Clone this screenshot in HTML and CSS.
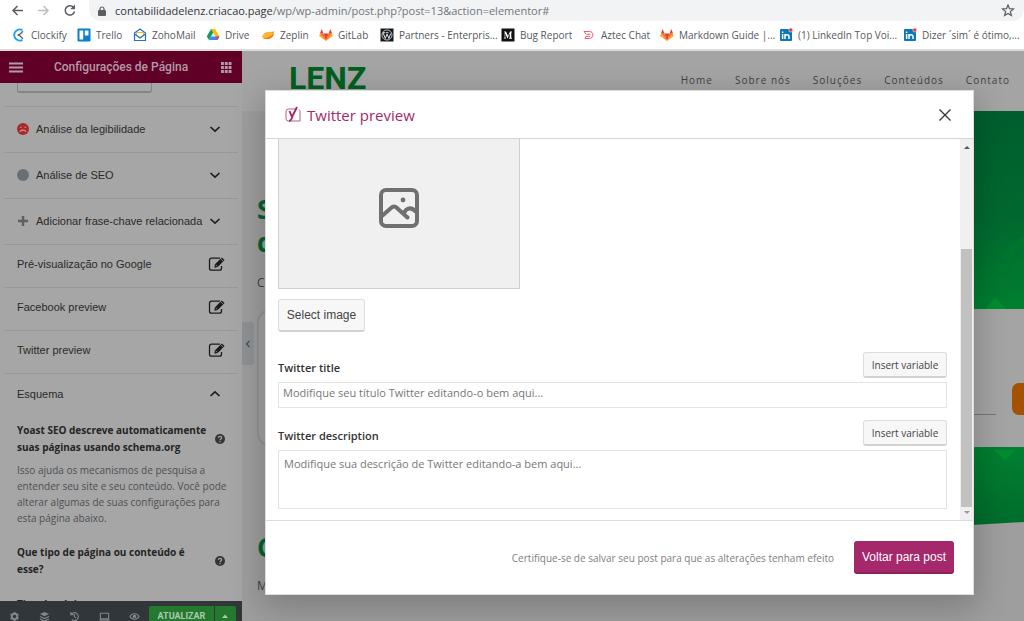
FILE: index.html
```html
<!DOCTYPE html>
<html lang="pt-BR">
<head>
<meta charset="utf-8">
<meta name="viewport" content="width=device-width, initial-scale=1">
<title>Elementor</title>
<link rel="stylesheet" href="styles.css">
</head>
<body>
<svg class="defs" aria-hidden="true">
  <symbol id="down" viewBox="0 0 12 12"><path d="M1.500 4 6 8.200 10.500 4" fill="none" stroke="currentColor" stroke-width="1.600"/></symbol>
  <symbol id="edit" viewBox="0 0 18 16"><path d="M12 2.200H3.500a2 2 0 0 0-2 2v8a2 2 0 0 0 2 2h8a2 2 0 0 0 2-2V10" fill="none" stroke="currentColor" stroke-width="1.300"/><path d="m6.300 11.800.7-3.600L13.800 1.400l2.800 2.700-6.800 6.900z" fill="currentColor"/><path d="m7.600 8.700 1.700 1.700M12.600 2.600l2.800 2.700" stroke="#a6a6a6" stroke-width=".7"/></symbol>
  <symbol id="help" viewBox="0 0 10 10"><circle cx="5" cy="5" r="5" fill="currentColor"/><path d="M3.400 3.900c.1-2 3.300-1.900 3.300-.1C6.700 5 5.100 5 5.100 6.200M5.100 7v1.200" fill="none" stroke="#a6a6a6" stroke-width="1.200"/></symbol>
  <symbol id="fox" viewBox="0 0 14 14"><path d="m7 13 2.500-7.500h-5z" fill="#e24329"/><path d="M7 13 4.500 5.500H1zM7 13l2.500-7.500H13z" fill="#fc6d26"/><path d="M1 5.500.2 8 7 13zM13 5.500l.8 2.500L7 13z" fill="#fca326"/><path d="m1 5.500 1.600-4.500 1.900 4.500zM13 5.500 11.400 1 9.500 5.500z" fill="#e24329"/></symbol>
  <symbol id="linkedin" viewBox="0 0 14 14"><rect x="1" y="1" width="12" height="12" rx="1" fill="#0a78b8"/><path d="M3.600 6v5M3.600 3.500v1.400M6 6v5M6 8.500c0-2.500 4-2.500 4 0V11" fill="none" stroke="#fff" stroke-width="1.500"/><circle cx="11.800" cy="2" r="2" fill="#ee3b30" stroke="#fff" stroke-width=".5"/></symbol>
</svg>

<header class="browser">
  <div class="address-row">
    <button class="icon-button" aria-label="Voltar"><svg viewBox="0 0 14 14"><path d="M12 6.500H2M6.500 2 2 6.500 6.500 11" fill="none" stroke="#5a5d61" stroke-width="1.500"/></svg></button>
    <button class="icon-button" aria-label="Avançar"><svg viewBox="0 0 14 14"><path d="M1 6.500h10M6.500 2 11 6.500 6.500 11" fill="none" stroke="#bcbec1" stroke-width="1.500"/></svg></button>
    <button class="icon-button" aria-label="Recarregar"><svg viewBox="0 0 14 14"><path d="M10.500 3.300A4.700 4.700 0 1 0 11.500 7.500" fill="none" stroke="#5a5d61" stroke-width="1.500"/><path d="M12 .5v4.800H7.200z" fill="#5a5d61"/></svg></button>
    <div class="address">
      <svg class="lock" viewBox="0 0 8 10"><rect y="4" width="8" height="6" rx="1" fill="#5a5d61"/><path d="M2 4.500V3a2 2 0 0 1 4 0v1.500" fill="none" stroke="#5a5d61" stroke-width="1.200"/></svg>
      <span class="url"><span class="host">contabilidadelenz.criacao.page</span>/wp/wp-admin/post.php?post=13&amp;action=elementor#</span>
      <svg class="star" viewBox="0 0 14 14"><path d="m7 1 1.500 3.700 4 .3-3.100 2.600 1 3.900L7 9.400l-3.400 2.100 1-3.900L1.500 5l4-.3z" fill="none" stroke="#5a5d61" stroke-width="1.200"/></svg>
    </div>
  </div>
  <nav class="bookmarks" aria-label="Favoritos">
    <a href="#"><svg viewBox="0 0 14 14"><path d="M10.500 2.100A5.600 5.600 0 1 0 10.500 11.900" fill="none" stroke="#18a8f0" stroke-width="1.800"/><path d="m7 7 4-3.700M7 7l4 3.700" stroke="#555b60" stroke-width="1.200"/><circle cx="6.500" cy="7" r="1" fill="#555b60"/></svg>Clockify</a>
    <a href="#"><svg viewBox="0 0 14 14"><rect x=".5" y=".5" width="13" height="13" rx="1" fill="#0a80c8"/><path d="M2.500 2.500h3.700v9H2.500zM7.800 2.500h3.700v5H7.800z" fill="#fff"/></svg>Trello</a>
    <a href="#"><svg viewBox="0 0 14 14"><path d="M1.500 5 7 1l5.500 4v7.500h-11z" fill="#fff" stroke="#2872b8" stroke-width="1.200"/><path d="M3.500 4.500h7v3L7 9.500l-3.500-2z" fill="#fff" stroke="#edb02c"/><path d="m1.500 6 5.500 4 5.500-4" fill="none" stroke="#2872b8" stroke-width="1.200"/></svg>ZohoMail</a>
    <a href="#"><svg viewBox="0 0 14 14"><path d="M5 1h4l4.500 7.500h-4z" fill="#fbbc04"/><path d="m5 1 2.200 3.600L3 12 .8 8.500z" fill="#0f9d58"/><path d="m3 12 2-3.500h8.500l-2 3.500z" fill="#4285f4"/><path d="m11.500 12 2-3.500h-4z" fill="#ea4335"/></svg>Drive</a>
    <a href="#"><svg viewBox="0 0 14 14"><ellipse cx="7" cy="7.300" rx="5.500" ry="3.500" transform="rotate(-14 7 7)" fill="#fdb52d"/><path d="M1 10c3 1 9-.5 12-5-.5 4-3.500 6-7 6-2 0-4 0-5-1z" fill="#ee7723"/><path d="m10 4 3.500-.8L12 6M2 8 .4 8.500 2 9.500" fill="#f69833"/></svg>Zeplin</a>
    <a href="#"><svg><use href="#fox"/></svg>GitLab</a>
    <a href="#"><svg viewBox="0 0 14 14"><path d="M.5.500h13v13H.500z" fill="#161b20"/><circle cx="7" cy="7" r="5" fill="none" stroke="#ddd" stroke-width=".8"/><path d="m3.200 5 2.100 5.500L7 6l1.900 4.500 1.700-5M2.800 4.700h2.500M6 4.700h2.500" fill="none" stroke="#ddd"/></svg>Partners - Enterpris...</a>
    <a href="#"><svg viewBox="0 0 14 14"><path d="M.5.500h13v13H.500z" fill="#101010"/><path d="M3 3.500h2L7 8l2-4.500h2v.6l-.7.600v4.800l.8.700v.5H8v-.5l.7-.7V5.500l-2.200 5.200L4.300 5.600v3.700l1 1.300H2.700l1-1.300V4.500z" fill="#fff"/></svg>Bug Report</a>
    <a href="#"><svg viewBox="0 0 14 14"><path d="M2 3.500h5.500c4.500 0 4.500 6.500 0 7H3l1-2.300M2 3.500l2 2.700M4.500 6.200h4M4 8.300h4" fill="none" stroke="#f05573"/></svg>Aztec Chat</a>
    <a href="#"><svg><use href="#fox"/></svg>Markdown Guide |...</a>
    <a href="#"><svg><use href="#linkedin"/></svg>(1) LinkedIn Top Voi...</a>
    <a href="#"><svg><use href="#linkedin"/></svg>Dizer ´sim´ é ótimo,...</a>
  </nav>
</header>

<main class="workspace">
  <aside class="panel">
    <header class="panel-header">
      <button class="icon-button" aria-label="Menu"><svg viewBox="0 0 14 14"><path d="M0 3.500h14M0 7.500h14M0 11.500h14" stroke="currentColor" stroke-width="2"/></svg></button>
      <h1>Configurações de Página</h1>
      <button class="icon-button" aria-label="Widgets"><svg viewBox="0 0 14 14"><path d="M2 3.500h10.500M2 7.500h10.500M2 11.500h10.500" stroke="currentColor" stroke-width="2.800" stroke-dasharray="2.900 .9"/></svg></button>
    </header>
    <div class="panel-body">
      <div class="field-end"><span></span></div>
      <button class="row"><svg class="mark" viewBox="0 0 12 12"><circle cx="6" cy="6" r="6" fill="#a82a2a"/><path d="M3 8.800c1-2.200 5-2.200 6 0M3 4.300h1.500M7.500 4.300H9" fill="none" stroke="#d29a9a" stroke-width="1.100"/></svg><span>Análise da legibilidade</span><svg class="chevron"><use href="#down"/></svg></button>
      <button class="row"><svg class="mark" viewBox="0 0 12 12"><circle cx="6" cy="6" r="6" fill="#6a6f76"/></svg><span>Análise de SEO</span><svg class="chevron"><use href="#down"/></svg></button>
      <button class="row"><svg class="mark" viewBox="0 0 12 12"><path d="M6 1v10M1 6h10" stroke="#5f5f5f" stroke-width="2.500"/></svg><span>Adicionar frase-chave relacionada</span><svg class="chevron"><use href="#down"/></svg></button>
      <button class="row short"><span>Pré-visualização no Google</span><svg class="edit"><use href="#edit"/></svg></button>
      <button class="row short"><span>Facebook preview</span><svg class="edit"><use href="#edit"/></svg></button>
      <button class="row short"><span>Twitter preview</span><svg class="edit"><use href="#edit"/></svg></button>
      <button class="row open"><span>Esquema</span><svg class="chevron up"><use href="#down"/></svg></button>
      <section class="schema">
        <div class="question"><h2>Yoast SEO descreve automaticamente suas páginas usando schema.org</h2><svg><use href="#help"/></svg></div>
        <p>Isso ajuda os mecanismos de pesquisa a entender seu site e seu conteúdo. Você pode alterar algumas de suas configurações para esta página abaixo.</p>
        <div class="question"><h2>Que tipo de página ou conteúdo é esse?</h2><svg><use href="#help"/></svg></div>
        <h3>Tipo de página</h3>
      </section>
    </div>
    <footer class="panel-footer">
      <button class="tool" aria-label="Configurações"><svg viewBox="0 0 12 12"><circle cx="6" cy="6" r="3" fill="none" stroke="currentColor" stroke-width="2.200"/><path d="M6 1v1.500M6 9.500V11M1.700 3.500 3 4.200M9 7.800l1.300.7M1.700 8.500 3 7.800M9 4.200l1.300-.7" stroke="currentColor" stroke-width="2"/></svg></button>
      <button class="tool" aria-label="Navegador"><svg viewBox="0 0 12 12"><path d="m6 1 5 2.300L6 5.600 1 3.300z" fill="currentColor"/><path d="m1 6 5 2.300L11 6M1 8.700 6 11l5-2.300" fill="none" stroke="currentColor" stroke-width="1.400"/></svg></button>
      <button class="tool" aria-label="Histórico"><svg viewBox="0 0 12 12"><path d="M2.500 3.500A4.300 4.300 0 1 1 3 9.300M2 1v3h3M6 3.500V6.500l2 1" fill="none" stroke="currentColor" stroke-width="1.200"/></svg></button>
      <button class="tool" aria-label="Modo responsivo"><svg viewBox="0 0 12 12"><path d="M1.500 2.500h9v6h-9zM.5 10h11" fill="none" stroke="currentColor" stroke-width="1.200"/></svg></button>
      <button class="tool" aria-label="Visualizar"><svg viewBox="0 0 12 12"><path d="M1 6c2-4 8-4 10 0-2 4-8 4-10 0z" fill="none" stroke="currentColor" stroke-width="1.200"/><circle cx="6" cy="6" r="2" fill="currentColor"/></svg></button>
      <button class="update">ATUALIZAR</button><button class="update more" aria-label="Opções"><svg viewBox="0 0 6 4"><path d="m0 4 3-3.500L6 4z" fill="currentColor"/></svg></button>
    </footer>
  </aside>

  <div class="site">
    <header class="site-header">
      <strong class="logo">LENZ</strong>
      <nav class="menu" aria-label="Site"><a href="#">Home</a><a href="#">Sobre nós</a><a href="#">Soluções</a><a href="#">Conteúdos</a><a href="#">Contato</a></nav>
    </header>
    <section class="hero">
      <div class="hero-text"><h2>S<br>d</h2><p>C</p></div>
      <svg class="hero-art" viewBox="0 0 52 198" preserveAspectRatio="none"><defs><linearGradient id="g" x2="0" y2="1"><stop stop-color="#005e2e"/><stop offset=".55" stop-color="#00692f"/><stop offset="1" stop-color="#007f2f"/></linearGradient></defs><path d="M0 0h52v198H0z" fill="url(#g)"/><path d="M52 126c-14 6-20 14-19 22l7 3c2-8 5-12 12-16zM5 152l11 7-7 9zM18 158l12-7 5 5 17-8v6l-16 8z" fill="#00782f" opacity=".6"/><path d="m13 198 10-11 11 11z" fill="#008d2f"/></svg>
    </section>
    <section class="form-band"><span class="card"></span><span class="line"></span><span class="cta"></span></section>
    <section class="lower">
      <svg class="lower-art" viewBox="0 0 52 80" preserveAspectRatio="none"><defs><linearGradient id="h" x2="0" y2="1"><stop stop-color="#008030"/><stop offset="1" stop-color="#006c2d"/></linearGradient></defs><path d="M0 0h52v75L0 78z" fill="url(#h)"/><path d="m22 3 11 10L44 3z" fill="#008d2f"/></svg>
      <div class="lower-text"><h2>C</h2><p>M</p></div>
    </section>
    <button class="collapse" aria-label="Recolher painel"><svg viewBox="0 0 6 8"><path d="M4.500 1 1.500 4l3 3" fill="none" stroke="#464b50" stroke-width="1.200"/></svg></button>
  </div>

  <div class="overlay">
    <div class="modal" role="dialog" aria-labelledby="modal-title">
      <header class="modal-header">
        <svg class="yoast" viewBox="0 0 16 18"><path d="M10.500 3H3.500A2.500 2.500 0 0 0 1 5.500v7A2.500 2.500 0 0 0 3.500 15H15V5.500a2.500 2.500 0 0 0-1-2" fill="none" stroke="#b85b91"/><path d="m4.500 5 2.500 6L12 1M7.500 10.500c-1 3-1.700 4.500-3.500 4.500" fill="none" stroke="#a4286a" stroke-width="1.900"/></svg>
        <h2 id="modal-title">Twitter preview</h2>
        <button class="close" aria-label="Fechar"><svg viewBox="0 0 12 12"><path d="m.5.500 11 11M11.500.500l-11 11" stroke="#333" stroke-width="1.300"/></svg></button>
      </header>
      <div class="modal-main">
        <form class="modal-form">
          <div class="image-slot"><svg viewBox="0 0 40 40"><rect x="2" y="2" width="36" height="36" rx="5" fill="none" stroke="#707070" stroke-width="4"/><path d="m3 28 9-8q3-3 6 0l11 10M24 26l3-4q5-4 10 2" fill="none" stroke="#707070" stroke-width="4"/><circle cx="24" cy="12" r="2.400" fill="#707070"/><circle cx="28.500" cy="29.500" r="2" fill="#707070"/></svg></div>
          <button type="button" class="button select-image">Select image</button>
          <div class="label-row"><label for="title">Twitter title</label><button type="button" class="button variable">Insert variable</button></div>
          <input id="title" type="text" placeholder="Modifique seu título Twitter editando-o bem aqui...">
          <div class="label-row second"><label for="description">Twitter description</label><button type="button" class="button variable">Insert variable</button></div>
          <textarea id="description" placeholder="Modifique sua descrição de Twitter editando-a bem aqui..."></textarea>
        </form>
        <div class="scrollbar" aria-hidden="true"><svg viewBox="0 0 6 4"><path d="m0 4 3-3 3 3z" fill="#555"/></svg><span class="thumb"></span><svg viewBox="0 0 6 4"><path d="m0 0 3 3 3-3z" fill="#999"/></svg></div>
      </div>
      <footer class="modal-footer"><p>Certifique-se de salvar seu post para que as alterações tenham efeito</p><button class="primary">Voltar para post</button></footer>
    </div>
  </div>
</main>
</body>
</html>
```

FILE: styles.css
```css
* { box-sizing: border-box; }
body {
  margin: 0;
  height: 100vh;
  display: flex;
  flex-direction: column;
  overflow: hidden;
  font-family: "Open Sans", "Noto Sans", sans-serif;
  font-size: 11px;
  color: #333;
}
h1, h2, h3, p { margin: 0; }
button { font: inherit; color: inherit; border: 0; padding: 0; background: none; cursor: pointer; }
a { color: inherit; text-decoration: none; }
svg { display: block; flex: none; }
.defs { position: absolute; width: 0; height: 0; }

/* Browser bars */
.browser { background: #fff; border-bottom: 2px solid #dcdcdc; flex: none; }
.address-row { display: flex; align-items: center; gap: 12px; height: 21px; padding-left: 11px; }
.icon-button svg { width: 14px; height: 14px; }
.address { flex: 1; display: flex; align-items: center; gap: 9px; height: 21px; padding: 0 9px 0 9px; background: #f1f3f4; border-radius: 0 0 12px 12px; }
.lock { width: 8px; height: 10px; }
.url { flex: 1; font-size: 11px; line-height: 20px; color: #72767b; white-space: nowrap; }
.host { color: #333639; }
.star { width: 14px; height: 14px; }
.bookmarks {
  display: grid;
  grid-template-columns: 65px 56px 73px 55px 58px 61px 121px 81px 78px 119px 124px 119px;
  height: 28px;
  padding-left: 12px;
  font-size: 10px;
  color: #55585c;
  white-space: nowrap;
}
.bookmarks a { display: flex; align-items: center; gap: 5px; }
.bookmarks svg { width: 14px; height: 14px; }

.workspace { position: relative; flex: 1; min-height: 0; display: flex; overflow: hidden; }

/* Editor panel */
.panel { width: 242px; flex: none; display: flex; flex-direction: column; background: #a6a6a6; }
.panel-header { display: flex; align-items: center; justify-content: space-between; height: 32px; padding: 0 9px; background: #600027; color: #b39ba5; flex: none; }
.panel-header h1 { font: 500 12px Roboto, sans-serif; }
.panel-body { flex: 1; min-height: 0; overflow: hidden; padding: 0 4px; }
.field-end { height: 24px; padding: 0 13px; border-bottom: 1px solid #989898; }
.field-end span { display: block; width: 135px; height: 10px; border: 1px solid #858585; border-top: 0; border-bottom-width: 2px; border-radius: 0 0 3px 3px; }
.row { display: flex; align-items: center; width: 100%; height: 46px; padding: 0 13px 2px; border-bottom: 1px solid #989898; font: 11px "Liberation Sans", sans-serif; color: #2a2a2a; text-align: left; }
.row span { flex: 1; white-space: nowrap; }
.row.short { height: 43px; padding-bottom: 4px; }
.row.open { height: 44px; border: 0; padding-bottom: 4px; }
.mark { width: 12px; height: 12px; margin-right: 7px; }
.chevron { width: 12px; height: 12px; margin-right: 4px; color: #1c1c1c; }
.up { transform: scaleY(-1); }
.edit { width: 18px; height: 16px; margin-right: -1px; color: #1c1c1c; }
.schema { padding: 4px 9px 0 13px; }
.question { display: flex; align-items: center; justify-content: space-between; padding-right: 4px; }
.question svg { width: 10px; height: 10px; color: #353535; }
.question h2 { width: 194px; font-size: 10px; font-weight: 700; line-height: 17px; color: #242424; }
.schema h3 { margin-top: 18px; font-size: 10px; font-weight: 700; line-height: 17px; color: #242424; }
.schema p { margin: 6px 0 18px; font-size: 10px; line-height: 16px; color: #4c5054; }
.panel-footer { display: flex; align-items: stretch; height: 20px; padding: 5px 6px 0 0; background: #31363b; color: #81868a; flex: none; overflow: hidden; }
.tool { flex: 1; display: flex; align-items: center; justify-content: center; height: 20px; }
.tool svg { width: 11px; height: 11px; }
.update { display: flex; align-items: center; justify-content: center; width: 65px; height: 20px; background: #25792f; color: #a9c9ad; border-radius: 2px 0 0 0; font: 700 9px Roboto, sans-serif; }
.update.more { width: 21px; margin-left: 1px; border-radius: 0 2px 0 0; }
.update svg { width: 6px; height: 4px; }

/* Site preview */
.site { position: relative; flex: 1; min-width: 0; display: flex; flex-direction: column; background: #9e9e9e; }
.site-header { display: flex; align-items: center; justify-content: space-between; height: 60px; padding: 0 14px 2px 47px; background: #a4a4a4; }
.logo { padding-bottom: 4px; font: 700 32px Roboto, sans-serif; color: #005f20; }
.menu { display: flex; gap: 22px; font-size: 10px; letter-spacing: 1px; color: #414141; }
.hero { display: flex; justify-content: space-between; height: 198px; }
.hero-text { padding: 82px 0 0 15px; }
.hero-text h2, .lower-text h2 { font: 700 26px/33px "Open Sans", sans-serif; color: #00642c; }
.hero-text p, .lower-text p { font-size: 12px; line-height: 20px; color: #414141; }
.hero-text p { margin-top: 14px; }
.hero-art { width: 52px; height: 198px; }
.form-band { display: flex; align-items: flex-start; height: 138px; background: linear-gradient(90deg, #9e9e9e 50%, #a4a4a4 50%); }
.card { width: 80px; height: 138px; margin-left: 15px; border: 2px solid #929292; border-radius: 14px; background: #a2a2a2; }
.line { width: 44px; height: 1px; margin: 105px 16px 0 auto; background: #777; }
.cta { width: 12px; height: 32px; margin-top: 74px; border-radius: 7px 0 0 7px; background: #a35300; }
.lower { display: flex; flex: 1; flex-direction: row-reverse; justify-content: space-between; }
.lower-art { width: 52px; height: 80px; }
.lower-text { padding: 84px 0 0 15px; }
.lower-text p { margin-top: 12px; }
.collapse { position: absolute; left: 0; top: 271px; width: 12px; height: 43px; padding-left: 3px; background: #8f9295; border-radius: 0 3px 3px 0; }
.collapse svg { width: 6px; height: 8px; }

/* Dialog */
.overlay { position: absolute; inset: 0; display: flex; padding: 39px 50px 26px 265px; }
.modal { flex: 1; min-width: 0; display: flex; flex-direction: column; background: #fff; border: 1px solid #ddd; box-shadow: 0 10px 30px 4px rgba(0, 0, 0, .2); }
.modal-header { display: flex; align-items: center; gap: 6px; height: 48px; padding: 0 22px 0 19px; border-bottom: 1px solid #d4d4d4; }
.yoast { width: 16px; height: 18px; }
.modal-header h2 { flex: 1; font-size: 15px; font-weight: 400; color: #a4286a; }
.close svg { width: 12px; height: 12px; }
.modal-main { flex: 1; min-height: 0; display: flex; overflow: hidden; }
.modal-form { flex: 1; display: flex; flex-direction: column; padding: 0 13px 11px 12px; }
.image-slot { display: flex; align-items: center; justify-content: center; width: 242px; height: 150px; padding-bottom: 12px; background: #f0f0f0; border: 1px solid #d0d0d0; border-top: 0; flex: none; }
.image-slot svg { width: 40px; height: 40px; }
.button { background: #f7f7f7; border: 1px solid #dcdcdc; border-bottom: 2px solid #d2d2d2; border-radius: 3px; color: #444; }
.select-image { width: 87px; height: 33px; margin: 10px 0 20px; font: 12px "Liberation Sans", sans-serif; flex: none; }
.label-row { display: flex; align-items: center; justify-content: space-between; height: 26px; margin-bottom: 4px; flex: none; }
.label-row label { padding-top: 5px; font-weight: 600; font-size: 11px; color: #333; }
.label-row.second { margin-top: 12px; }
.variable { width: 84px; height: 26px; font-size: 10px; }
input, textarea { width: 100%; margin: 0; border: 1px solid #e3e3e3; background: #fff; font: 11px/15px "Open Sans", sans-serif; color: #333; outline: 0; border-radius: 0; }
input { height: 26px; padding: 0 4px 5px; flex: none; }
textarea { flex: 1; padding: 5px; resize: none; }
input::placeholder, textarea::placeholder { color: #777; opacity: 1; }
.scrollbar { display: flex; flex-direction: column; align-items: center; width: 13px; padding: 6px 0 5px; background: #f0f0f0; }
.scrollbar svg { width: 6px; height: 4px; }
.thumb { width: 11px; height: 258px; margin: auto 0 4px; background: #c1c1c1; }
.modal-footer { display: flex; align-items: center; justify-content: flex-end; gap: 20px; height: 74px; padding-right: 19px; border-top: 1px solid #ddd; }
.modal-footer p { font-size: 10px; color: #808080; white-space: nowrap; }
.primary { width: 100px; height: 33px; border-radius: 3px; border-bottom: 2px solid #8d2059; background: #a4286a; color: #fff; font: 12px "Liberation Sans", sans-serif; }
```
